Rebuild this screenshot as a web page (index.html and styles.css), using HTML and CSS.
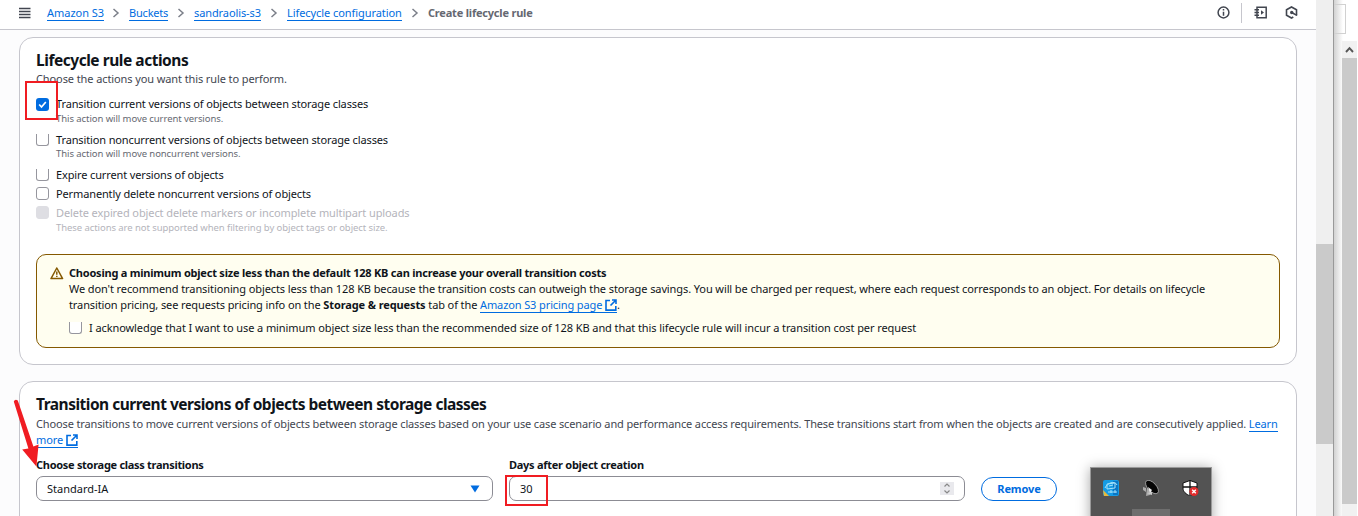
FILE: index.html
```html
<!DOCTYPE html>
<html lang="en">
<head>
<meta charset="utf-8">
<title>Create lifecycle rule</title>
<link rel="stylesheet" href="styles.css">
</head>
<body>
<div class="desktop">
  <div class="window">
    <header class="topbar">
      <svg class="menu" width="12" height="12" viewBox="0 0 12 12"><path d="M0 1.5h11.5M0 4.5h11.5M0 7.5h11.5M0 10.5h11.5" stroke="#424650" stroke-width="1.4"/></svg>
      <nav class="crumbs">
        <a class="c1">Amazon S3</a><svg class="sep first" viewBox="0 0 8 10"><path d="M1.5 1l4.5 4-4.5 4"/></svg>
        <a class="c2">Buckets</a><svg class="sep" viewBox="0 0 8 10"><path d="M1.5 1l4.5 4-4.5 4"/></svg>
        <a class="c3">sandraolis-s3</a><svg class="sep" viewBox="0 0 8 10"><path d="M1.5 1l4.5 4-4.5 4"/></svg>
        <a class="c4">Lifecycle configuration</a><svg class="sep" viewBox="0 0 8 10"><path d="M1.5 1l4.5 4-4.5 4"/></svg>
        <b>Create lifecycle rule</b>
      </nav>
      <div class="tools">
        <svg width="13" height="13" viewBox="0 0 13 13" fill="none" stroke="#424650" stroke-width="1.5"><circle cx="6.5" cy="6.5" r="5.4"/><path d="M6.5 5.7v4M6.5 3v1.5"/></svg>
        <i class="divider"></i>
        <svg width="14" height="13" viewBox="0 0 14 13" fill="none" stroke="#424650" stroke-width="1.5"><path d="M3 1.2h9.2v10.6H3zM.5 3.8H5M.5 6.5H5M.5 9.2H5"/><path d="M7 4.3v4.4l3-2.2z" fill="#424650" stroke="none"/></svg>
        <svg width="13" height="13" viewBox="0 0 13 13" fill="none" stroke="#424650" stroke-width="1.6"><path d="M8.3 11l-1.8 1-5-2.8V3.8l5-2.8 5 2.8v5.6"/><path d="M12 9.4L7 6.8"/><circle cx="6.7" cy="6.5" r="1.7" fill="#424650" stroke="none"/></svg>
      </div>
    </header>
    <main>
      <section class="card actions">
        <h2>Lifecycle rule actions</h2>
        <p class="desc d1">Choose the actions you want this rule to perform.</p>
        <div class="option o1"><span class="box checked"><svg width="13" height="13" viewBox="0 0 13 13"><path d="M3.2 6.5l2.3 2.5 4.3-5" fill="none" stroke="#fff" stroke-width="1.7"/></svg></span><div><div class="label">Transition current versions of objects between storage classes</div><div class="hint">This action will move current versions.</div></div></div>
        <div class="option o2"><span class="box clipped"></span><div><div class="label">Transition noncurrent versions of objects between storage classes</div><div class="hint">This action will move noncurrent versions.</div></div></div>
        <div class="option o3"><span class="box clipped"></span><div class="label">Expire current versions of objects</div></div>
        <div class="option o4"><span class="box"></span><div class="label">Permanently delete noncurrent versions of objects</div></div>
        <div class="option disabled"><span class="box"></span><div><div class="label">Delete expired object delete markers or incomplete multipart uploads</div><div class="hint">These actions are not supported when filtering by object tags or object size.</div></div></div>
        <div class="alert">
          <svg class="warn" width="14" height="13" viewBox="0 0 14 13" fill="none" stroke="#855900" stroke-width="1.5" stroke-linejoin="round"><path d="M6.8 1L1 11.6h11.6z"/><path d="M6.8 4.5v3.2M6.8 8.7v1.4"/></svg>
          <div class="alert-body">
            <div class="at">Choosing a minimum object size less than the default 128 KB can increase your overall transition costs</div>
            <div class="al1">We don't recommend transitioning objects less than 128 KB because the transition costs can outweigh the storage savings. You will be charged per request, where each request corresponds to an object. For details on lifecycle</div>
            <div class="al2">transition pricing, see requests pricing info on the <b>Storage &amp; requests</b> tab of the <a>Amazon S3 pricing page <svg class="ext" viewBox="0 0 12 12"><path d="M5 1.5H1v9.6h9.8V7M7 1h4v4M11 1L5.5 6.5"/></svg></a>.</div>
            <div class="option ack"><span class="box clipped"></span><div class="al3">I acknowledge that I want to use a minimum object size less than the recommended size of 128 KB and that this lifecycle rule will incur a transition cost per request</div></div>
          </div>
        </div>
      </section>
      <section class="card transitions">
        <h2 class="h2b">Transition current versions of objects between storage classes</h2>
        <p class="desc d2">Choose transitions to move current versions of objects between storage classes based on your use case scenario and performance access requirements. These transitions start from when the objects are created and are consecutively applied. <a>Learn</a></p>
        <p class="desc d3"><a>more <svg class="ext" viewBox="0 0 12 12"><path d="M5 1.5H1v9.6h9.8V7M7 1h4v4M11 1L5.5 6.5"/></svg></a></p>
        <div class="form">
          <div class="field"><label class="f1">Choose storage class transitions</label><div class="input"><span>Standard-IA</span><svg width="10" height="8" viewBox="0 0 10 8"><path d="M.5.5h9L5 7.5z" fill="#006ce0"/></svg></div></div>
          <div class="field days"><label class="f2">Days after object creation</label><div class="input num"><span>30</span><svg width="14" height="13" viewBox="0 0 14 13"><path d="M0 0h14v13H0z" fill="#e9e9ed"/><path d="M4.5 4.5L7 2l2.5 2.5M4.5 8.5L7 11l2.5-2.5" fill="none" stroke="#888" stroke-width="1.2"/></svg></div></div>
          <button>Remove</button>
        </div>
      </section>
    </main>
  </div>
  <div class="scroll"><i></i></div>
  <div class="behind">
    <div class="stub"></div>
    <div class="scroll2"><svg width="15" height="17" viewBox="0 0 15 17"><path d="M4 11l3.5-3.8L11 11" fill="none" stroke="#555" stroke-width="1.9"/></svg><i></i></div>
  </div>
  <div class="mark m1"></div>
  <div class="mark m2"></div>
  <svg class="arrow" width="32" height="72" viewBox="0 0 32 72"><path d="M3.8 4.4Q5 1.8 7.8 3.4L23.4 49.4L28.6 47.4L26.4 69.4L12.2 52.6L18.4 51.6z" fill="#f01c22"/></svg>
  <div class="tray">
    <svg width="17" height="16" viewBox="0 0 17 16"><rect width="16" height="16" rx="2" fill="#159be4"/><path d="M0 10l6 6H1z" fill="#e8b93b"/><path d="M10 1h5v14h-5z" fill="#0876c5"/><path d="M4 9V4l8-1v5zM6 6l4-1M2 8c2-5 10-8 12-3M5 12h9M8 10v3M12 10v3" fill="none" stroke="#a5e2fb" stroke-width="1"/></svg>
    <svg width="17" height="16" viewBox="0 0 17 16"><path d="M0 7l3 1v4l-3-2zM4 8l4-1 3 4-4 4-4 1z" fill="#aaa"/><ellipse cx="9" cy="7" rx="4.2" ry="8.3" transform="rotate(-43 9 7)" fill="#050505" stroke="#bbb" stroke-width=".7"/><path d="M5 7l4 3-2 3z" fill="#eee"/><path d="M4 13l5-1v3z" fill="#ccc"/></svg>
    <svg width="17" height="16" viewBox="0 0 17 16"><path d="M8 .5L15 3v5c0 4-3 6-7 8-4-2-7-4-7-8V3z" fill="#fff" stroke="#111"/><path d="M8 0v15M1 7h14" stroke="#111" stroke-width="1.3"/><circle cx="12" cy="11.5" r="4.5" fill="#e22b2b"/><path d="M10.2 9.7l3.6 3.6M13.8 9.7l-3.6 3.6" stroke="#fff" stroke-width="1.4"/></svg>
    <i></i>
  </div>
</div>
</body>
</html>
```
FILE: styles.css
```css
* { box-sizing: border-box; }
body { margin: 0; background: #fff; font-family: "Noto Sans", "Open Sans", sans-serif; font-size: 11px; color: #0f141a; }
.desktop { position: relative; display: flex; width: 1358px; height: 516px; overflow: hidden; white-space: nowrap; }
.window { width: 1316px; background: #fcfcfd; overflow: hidden; }
.topbar { height: 30px; display: flex; align-items: center; padding: 0 18px 4px 19px; background: #fff; border-bottom: 1px solid #c6c6cd; }
.menu { margin-right: 16px; }
.crumbs { display: flex; align-items: center; line-height: 14px; flex: 1; }
.crumbs a { height: 15px; border-bottom: 1px solid #006ce0; position: relative; top: 1px; }
a { color: #006ce0; }
.c1 { width: 57px; letter-spacing: -.02px; }
.c2 { width: 39px; letter-spacing: -.2px; }
.c3 { width: 67px; letter-spacing: -.1px; }
.c4 { width: 115px; letter-spacing: -.07px; }
.crumbs b { color: #656871; letter-spacing: -.2px; }
.sep { width: 8px; height: 10px; margin: 0 9px 0 9px; fill: none; stroke: #7b7f89; stroke-width: 1.5; }
.first { margin-left: 8px; }
.tools { display: flex; align-items: center; }
.divider { width: 1px; height: 20px; background: #c6c6cd; margin: 0 12px 0 11px; }
.tools svg:last-child { margin-left: 17px; }
main { padding: 7px 19px 0; display: flex; flex-direction: column; gap: 16px; }
.card { background: #fff; border: 1px solid #c6c6cd; border-radius: 14px; padding: 12px 16px 0; }
.actions { height: 328px; }
.transitions { height: 160px; }
h2 { margin: 0; font-size: 15.5px; line-height: 20px; letter-spacing: -.46px; padding-bottom: 1px; }
.h2b { letter-spacing: -.5px; padding-bottom: 2px; }
.desc { margin: 0; line-height: 16px; color: #424650; letter-spacing: -.1px; }
.d2 { letter-spacing: -.135px; }
.option { display: flex; align-items: flex-start; gap: 7px; }
.box { width: 13px; height: 13px; border: 1px solid #96969e; border-radius: 3px; background: #fff; flex: none; margin-top: 1px; }
.box svg { display: block; }
.checked { background: #006ce0; border: 0; margin-top: 2px; }
.clipped { border-top: 0; height: 12px; margin-top: 2px; border-radius: 0 0 3px 3px; }
.label { line-height: 15px; letter-spacing: -.13px; }
.hint { font-size: 9.5px; line-height: 13px; color: #656871; letter-spacing: -.07px; }
.o1 { margin-top: 9px; height: 36px; }
.o1 .label, .disabled .label { padding-bottom: 1px; }
.o2 { height: 35px; }
.o3, .o4 { height: 19px; }
.disabled { height: 50px; }
.disabled .label, .disabled .hint { color: #b4b4bb; }
.disabled .label { letter-spacing: -.1px; }
.disabled .box { background: #dedee3; border-color: #dedee3; }
.alert { height: 94px; border: 1px solid #855900; border-radius: 10px; background: #fffef0; display: flex; padding: 10px 13px; margin-top: -1px; }
.warn { margin: 2px 5px 0 0; }
.alert-body { line-height: 16px; }
.at { font-weight: bold; letter-spacing: -.22px; }
.al1 { letter-spacing: -.1px; }
.al2 { letter-spacing: -.11px; }
.al3 { letter-spacing: -.085px; }
.ack { margin-top: 7px; }
.alert a, .desc a { border-bottom: 1px solid #006ce0; }
.ext { width: 12px; height: 12px; vertical-align: -2px; fill: none; stroke: #006ce0; stroke-width: 1.6; }
.form { display: flex; gap: 16px; margin-top: 9px; align-items: flex-end; }
.field { width: 457px; }
.days { width: 456px; }
label { display: block; font-weight: bold; line-height: 15px; margin-bottom: 4px; }
.f1 { letter-spacing: -.29px; }
.f2 { letter-spacing: -.27px; }
.input { height: 25px; border: 1px solid #8c8c94; border-radius: 7px; display: flex; align-items: center; justify-content: space-between; padding: 0 12px 0 10px; }
.num { padding-right: 10px; }
button { width: 76px; height: 24px; border: 1.5px solid #006ce0; border-radius: 12px; background: #fff; color: #006ce0; font: bold 11px "Noto Sans", sans-serif; letter-spacing: -.1px; padding: 0 0 1px; }
.scroll { width: 17px; background: #efefef; padding-top: 244px; }
.scroll i { display: block; height: 200px; background: #cacaca; }
.behind { width: 25px; border-left: 1px solid #999; background: linear-gradient(90deg, #d2d2d2, #fff 9px); padding-top: 4px; }
.stub { width: 12px; height: 30px; border: solid #d1d1d1; border-width: 1px 1px 1px 0; }
.scroll2 { width: 15px; height: 475px; margin: 7px 0 0 8px; background: #f1f1f1; }
.scroll2 svg { display: block; }
.scroll2 i { display: block; height: 446px; background: #cacaca; }
.mark { position: absolute; border: 2px solid #f01c22; }
.m1 { left: 25px; top: 81px; width: 33px; height: 39px; }
.m2 { left: 505px; top: 475px; width: 43px; height: 31px; }
.arrow { position: absolute; left: 10px; top: 397px; }
.tray { position: absolute; left: 1090px; top: 467px; width: 122px; height: 60px; background: #535353; border: 1px solid #999; box-shadow: 0 1px 12px rgba(0,0,0,.35); display: flex; justify-content: space-between; padding: 12px 12px 0; }
.tray i { position: absolute; left: 41px; top: 41px; width: 38px; height: 10px; background: #6e6e6e; }
```
